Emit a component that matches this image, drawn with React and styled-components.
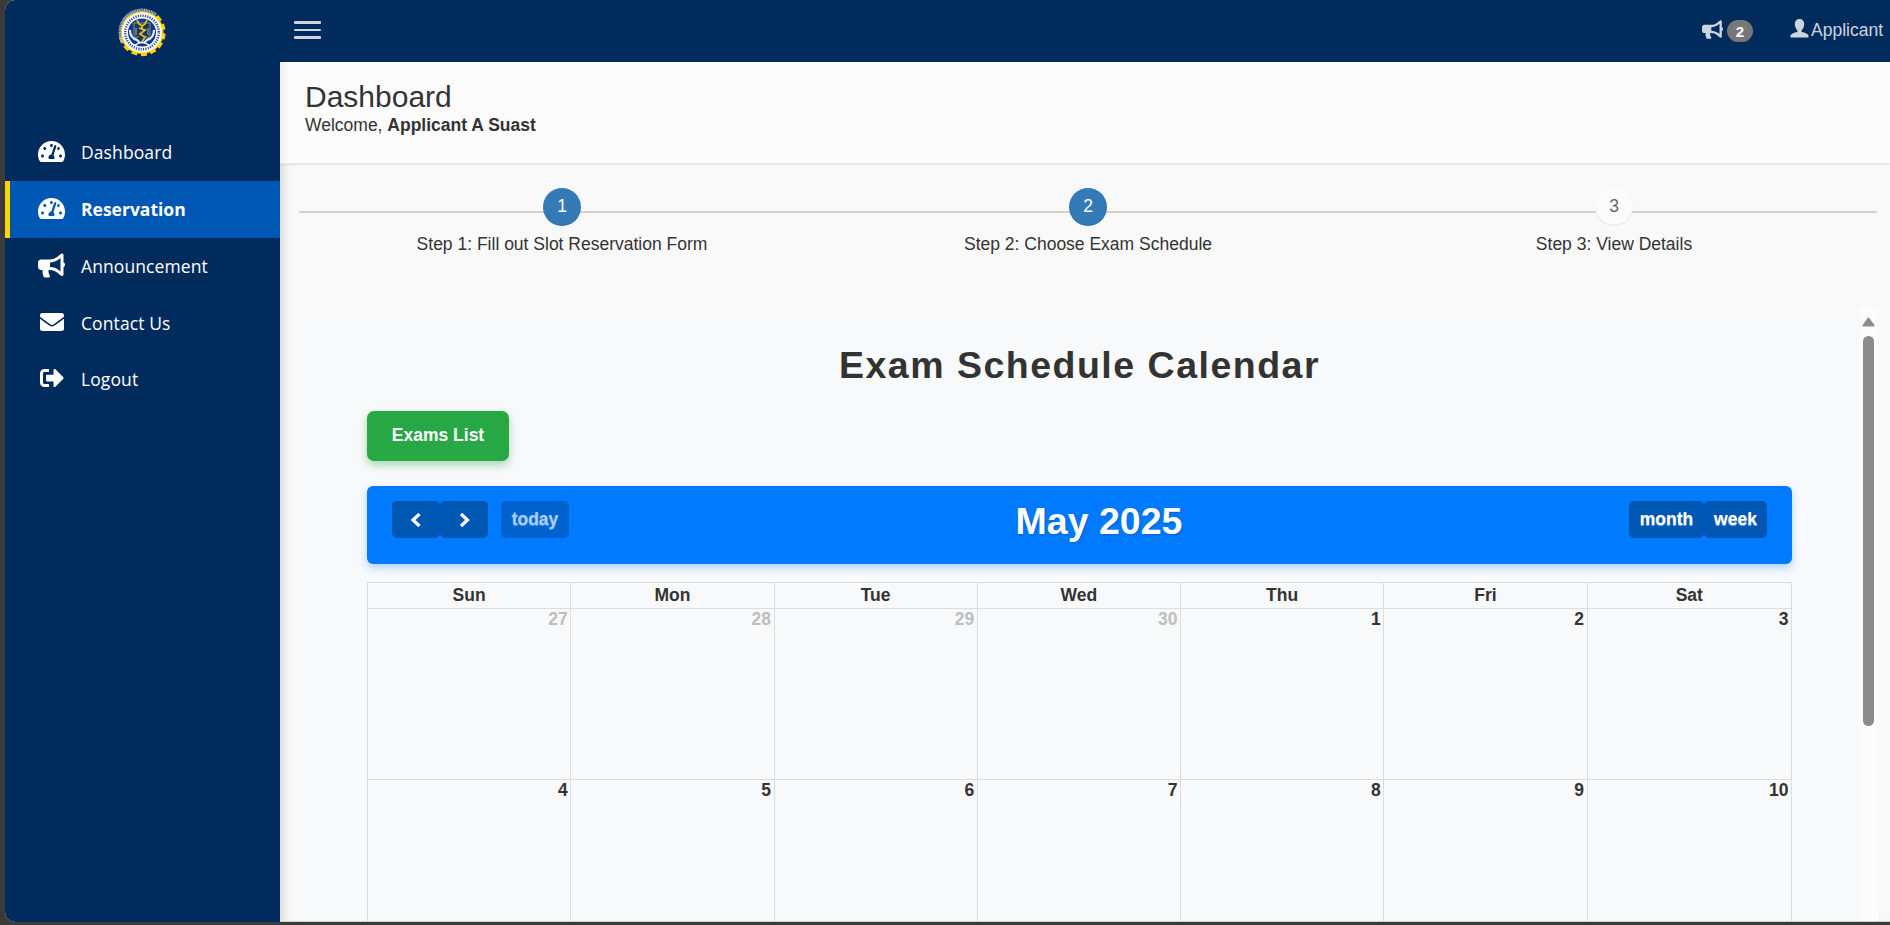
import React from "react";
import styled, { createGlobalStyle } from "styled-components";
import { FaTachometerAlt, FaBullhorn, FaEnvelope, FaSignOutAlt } from "react-icons/fa";

const navy = "#002b5c";

const GlobalStyle = createGlobalStyle`
  *, *::before, *::after { box-sizing: border-box; }
  body {
    margin: 0;
    background: #3b3b3b;
    color: #333;
    font-family: "Liberation Sans", Arial, sans-serif;
    font-size: 17.5px;
    line-height: 25px;
    overflow: hidden;
  }
`;

const Window = styled.div`
  display: flex;
  height: 922px;
  margin-left: 5px;
  border-radius: 10px 0 0 10px;
  overflow: hidden;
  background: #f9f9f9;
`;

const Sidebar = styled.aside`
  display: flex;
  flex-direction: column;
  flex: 0 0 275px;
  background: ${navy};
`;

const LogoArea = styled.div`
  display: flex;
  justify-content: center;
  height: 124px;
  padding: 8px 2px 0 0;
`;

const NavItem = styled.a`
  display: flex;
  align-items: center;
  height: 57px;
  padding-left: 27px;
  border-left: 5px solid ${(p) => (p.$active ? "#ffd700" : "transparent")};
  background: ${(p) => (p.$active ? "#0056b3" : "transparent")};
  color: #fff;
  font-family: "Open Sans", "Noto Sans", sans-serif;
  font-size: 17.5px;
  font-weight: ${(p) => (p.$active ? 700 : 400)};
  letter-spacing: ${(p) => (p.$active ? 0 : 0.1)}px;

  &:nth-of-type(n + 4) { height: 56px; }
`;

const NavIcon = styled.span`
  display: flex;
  justify-content: center;
  width: 28px;
  margin-right: 16px;
  padding: 0 0 2px 1px;
`;

const Main = styled.div`
  display: flex;
  flex-direction: column;
  flex: 1;
  min-width: 0;
`;

const TopBar = styled.header`
  display: flex;
  align-items: center;
  justify-content: space-between;
  flex: 0 0 62px;
  padding: 0 5px 2px 14px;
  background: ${navy};
  color: #ccd5de;
`;

const MenuButton = styled.div`
  display: flex;
  flex-direction: column;
  justify-content: space-between;
  width: 27px;
  height: 18px;
`;

const MenuLine = styled.span`
  height: ${(p) => p.$h}px;
  border-radius: 1px;
  background: #ccd5de;
`;

const UserArea = styled.div`
  display: flex;
  align-items: center;
`;

const BadgedIcon = styled.span`
  display: flex;
  padding-bottom: 1px;
`;

const Badge = styled.span`
  width: 26px;
  height: 22px;
  margin: 2px 37px 0 4px;
  border-radius: 12px;
  background: #777;
  color: #fff;
  font-size: 15px;
  font-weight: 700;
  line-height: 23px;
  text-align: center;
`;

const PersonIcon = styled.svg`
  margin-bottom: 3px;
`;

const UserName = styled.span`
  width: 74px;
  margin-left: 2px;
  white-space: nowrap;
`;

const Content = styled.div`
  display: flex;
  flex-direction: column;
  flex: 1;
  min-height: 0;
  box-shadow: inset 9px 0 9px -5px rgba(0, 0, 0, 0.12);
  border-bottom: 1px solid #cdd3cf;
`;

const PageHeading = styled.section`
  flex: 0 0 102px;
  padding: 18px 25px 0;
  background: linear-gradient(90deg, #f0f0f0, #fcfcfc 9px);
  border-bottom: 1px solid #e7e7e7;
  box-shadow: 0 1px 2px rgba(0, 0, 0, 0.08);
`;

const PageTitle = styled.h1`
  margin: 0;
  font-size: 30px;
  font-weight: 400;
  line-height: 33px;
`;

const Welcome = styled.p`
  margin: 0;
`;

const Steps = styled.ol`
  display: grid;
  grid-template-columns: repeat(3, 1fr);
  flex: 0 0 143px;
  margin: 0 13px 0 19px;
  padding: 24px 0 0;
  list-style: none;
  background: linear-gradient(#d2d2d2, #d2d2d2) 0 47px / 100% 2px no-repeat;
`;

const Step = styled.li`
  display: flex;
  flex-direction: column;
  align-items: center;
  gap: 6px;
`;

const StepCircle = styled.span`
  width: 38px;
  height: 38px;
  border-radius: 50%;
  background: ${(p) => (p.$done ? "#337ab7" : "#fbfbfb")};
  box-shadow: inset 0 -1px 1px rgba(0, 0, 0, 0.1);
  color: ${(p) => (p.$done ? "#fff" : "#666")};
  line-height: 36px;
  text-align: center;
`;

const ScrollArea = styled.div`
  display: flex;
  flex: 1;
  min-height: 0;
  margin: 0 12px 0 19px;
  background: #f8f9fb;
`;

const CalendarPane = styled.section`
  flex: 1;
  min-width: 0;
  padding: 36px 67px 0 68px;
  overflow: hidden;
`;

const CalendarHeading = styled.h2`
  margin: 0;
  font-size: 37.5px;
  font-weight: 700;
  line-height: 44px;
  letter-spacing: 1.5px;
  text-align: center;
`;

const ExamsButton = styled.button`
  display: block;
  width: 142px;
  height: 50px;
  margin: 24px 0 25px;
  padding: 0 0 2px;
  border: 0;
  border-radius: 7px;
  background: #28a745;
  box-shadow: 0 4px 8px rgba(40, 167, 69, 0.4);
  color: #fff;
  font: 700 17.5px/25px "Liberation Sans", Arial, sans-serif;
`;

const Toolbar = styled.div`
  display: flex;
  justify-content: space-between;
  align-items: flex-start;
  height: 78px;
  margin-bottom: 18px;
  padding: 15px 25px;
  border-radius: 6px;
  background: #007bff;
  box-shadow: 0 4px 8px rgba(0, 123, 255, 0.3);
`;

const ButtonGroup = styled.div`
  display: flex;
`;

const ToolButton = styled.button`
  display: flex;
  align-items: center;
  justify-content: center;
  width: ${(p) => p.$w}px;
  height: 37px;
  margin-left: ${(p) => p.$gap || 0}px;
  padding: 0;
  border: 0;
  border-radius: 5px;
  background: #0056b3;
  color: #fff;
  font: 700 17.5px/25px "Liberation Sans", Arial, sans-serif;
  text-shadow: 0 1px 1px rgba(255, 255, 255, 0.5);
  opacity: ${(p) => (p.$dim ? 0.65 : 1)};
`;

const MonthTitle = styled.h2`
  margin: 0;
  color: #fff;
  font-size: 37.5px;
  font-weight: 700;
  line-height: 40px;
  text-shadow: 1px 1px 3px rgba(0, 0, 0, 0.2);
`;

const Grid = styled.div`
  display: grid;
  grid-template-columns: repeat(6, 203.25px) 1fr;
  grid-template-rows: 26px 171px 171px;
  border-top: 1px solid #ddd;
  border-left: 1px solid #ddd;
`;

const WeekDay = styled.div`
  border-right: 1px solid #ddd;
  border-bottom: 1px solid #ddd;
  font-weight: 700;
  line-height: 25px;
  text-align: center;
`;

const Day = styled.div`
  padding-right: 2.5px;
  border-right: 1px solid #ddd;
  border-bottom: 1px solid #ddd;
  color: ${(p) => (p.$other ? "#bdbebf" : "#333")};
  font-weight: 700;
  line-height: 21px;
  text-align: right;
`;

const ScrollTrack = styled.div`
  display: flex;
  flex-direction: column;
  align-items: center;
  flex: 0 0 19px;
  padding-top: 10px;
  background: #fcfcfc;
`;

const ScrollThumb = styled.div`
  width: 11px;
  height: 390px;
  margin-top: 9px;
  border-radius: 6px;
  background: #8b8b8b;
`;

const teeth = Array.from({ length: 9 }, (_, i) => -40 + i * 25);

function Seal() {
  return (
    <svg width="48" height="49" viewBox="0 0 48 49">
      {teeth.map((a) => (
        <rect key={a} x="43" y="21.5" width="4.5" height="6" fill="#ffd20a" transform={`rotate(${a} 24 24.5)`} />
      ))}
      <circle cx="24" cy="24.5" r="21.5" fill="#ffd20a" />
      <path d="M5 35A22 22 0 0 1 38 7" fill="none" stroke="#a9b4c1" strokeWidth="3" strokeDasharray="1.2 .5" />
      <circle cx="24" cy="24.5" r="20" fill="#fff" />
      <circle cx="24" cy="24.5" r="16.8" fill="none" stroke="#304f8c" strokeWidth="2.6" strokeDasharray="1.2 1.2" />
      <circle cx="24" cy="24.5" r="14" fill="#07399a" />
      <path d="M16 15h16v12q-2 6-8 8-6-2-8-8z" fill="#18395f" stroke="#c4a53c" strokeWidth=".8" />
      <path d="M18 20v7M30 20v7M20.500 28l-2 2M27.500 28l2 2" stroke="#9fb2cc" strokeWidth="1" />
      <path d="M19 12l2 4 3 2 3-2 2-4M24 17v5M21 20l6 2-5 4 5 3-3 5" fill="none" stroke="#e9bb22" strokeWidth="1.8" />
      <path d="M12 22q0 8 7 10l3 3M36 22q0 8-7 10l-3 3" fill="none" stroke="#e4ebf4" strokeWidth="2.2" />
      <path d="M17 37q7-5 14 0" fill="none" stroke="#fff" strokeWidth="1.5" />
    </svg>
  );
}

const nav = [
  { label: "Dashboard", icon: <FaTachometerAlt size={27} /> },
  { label: "Reservation", icon: <FaTachometerAlt size={27} />, active: true },
  { label: "Announcement", icon: <FaBullhorn size={27} /> },
  { label: "Contact Us", icon: <FaEnvelope size={24} /> },
  { label: "Logout", icon: <FaSignOutAlt size={24} /> },
];
const steps = ["Step 1: Fill out Slot Reservation Form", "Step 2: Choose Exam Schedule", "Step 3: View Details"];
const weekDays = ["Sun", "Mon", "Tue", "Wed", "Thu", "Fri", "Sat"];
const days = [27, 28, 29, 30, 1, 2, 3, 4, 5, 6, 7, 8, 9, 10];

const Chevron = ({ d }) => (
  <svg width="12" height="16" viewBox="0 0 12 16">
    <path d={d} fill="none" stroke="#fff" strokeWidth="3.2" />
  </svg>
);

export default function App() {
  return (
    <>
      <GlobalStyle />
      <Window>
        <Sidebar>
          <LogoArea><Seal /></LogoArea>
          {nav.map((n) => (
            <NavItem key={n.label} $active={n.active}>
              <NavIcon>{n.icon}</NavIcon>
              {n.label}
            </NavItem>
          ))}
        </Sidebar>
        <Main>
          <TopBar>
            <MenuButton>
              <MenuLine $h={3} /><MenuLine $h={2} /><MenuLine $h={3} />
            </MenuButton>
            <UserArea>
              <BadgedIcon><FaBullhorn size={21} /></BadgedIcon>
              <Badge>2</Badge>
              <PersonIcon width="19" height="19" viewBox="0 0 19 19">
                <path d="M9.500 0C6.500 0 4.800 2 4.800 5c0 3 1.200 5 2.700 6.500v1.200C4 14 .5 14.500.5 17v1.500h18V17c0-2.500-3.500-3-7-4.300v-1.200C13 10 14.200 8 14.200 5c0-3-1.700-5-4.700-5z" fill="#ccd5de" />
              </PersonIcon>
              <UserName>Applicant</UserName>
            </UserArea>
          </TopBar>
          <Content>
            <PageHeading>
              <PageTitle>Dashboard</PageTitle>
              <Welcome>Welcome, <b>Applicant A Suast</b></Welcome>
            </PageHeading>
            <Steps>
              {steps.map((s, i) => (
                <Step key={s}>
                  <StepCircle $done={i < 2}>{i + 1}</StepCircle>
                  {s}
                </Step>
              ))}
            </Steps>
            <ScrollArea>
              <CalendarPane>
                <CalendarHeading>Exam Schedule Calendar</CalendarHeading>
                <ExamsButton>Exams List</ExamsButton>
                <Toolbar>
                  <ButtonGroup>
                    <ToolButton $w={48}><Chevron d="M9.500 2 3 8l6.500 6" /></ToolButton>
                    <ToolButton $w={48}><Chevron d="M3 2 9.500 8 3 14" /></ToolButton>
                    <ToolButton $w={68} $gap={13} $dim>today</ToolButton>
                  </ButtonGroup>
                  <MonthTitle>May 2025</MonthTitle>
                  <ButtonGroup>
                    <ToolButton $w={75}>month</ToolButton>
                    <ToolButton $w={63}>week</ToolButton>
                  </ButtonGroup>
                </Toolbar>
                <Grid>
                  {weekDays.map((d) => <WeekDay key={d}>{d}</WeekDay>)}
                  {days.map((d, i) => <Day key={d} $other={i < 4}>{d}</Day>)}
                </Grid>
              </CalendarPane>
              <ScrollTrack>
                <svg width="13" height="10" viewBox="0 0 13 10">
                  <path d="M6.500 1.500 11.500 8.500H1.500z" fill="#8b8b8b" stroke="#8b8b8b" strokeWidth="2" strokeLinejoin="round" />
                </svg>
                <ScrollThumb />
              </ScrollTrack>
            </ScrollArea>
          </Content>
        </Main>
      </Window>
    </>
  );
}
